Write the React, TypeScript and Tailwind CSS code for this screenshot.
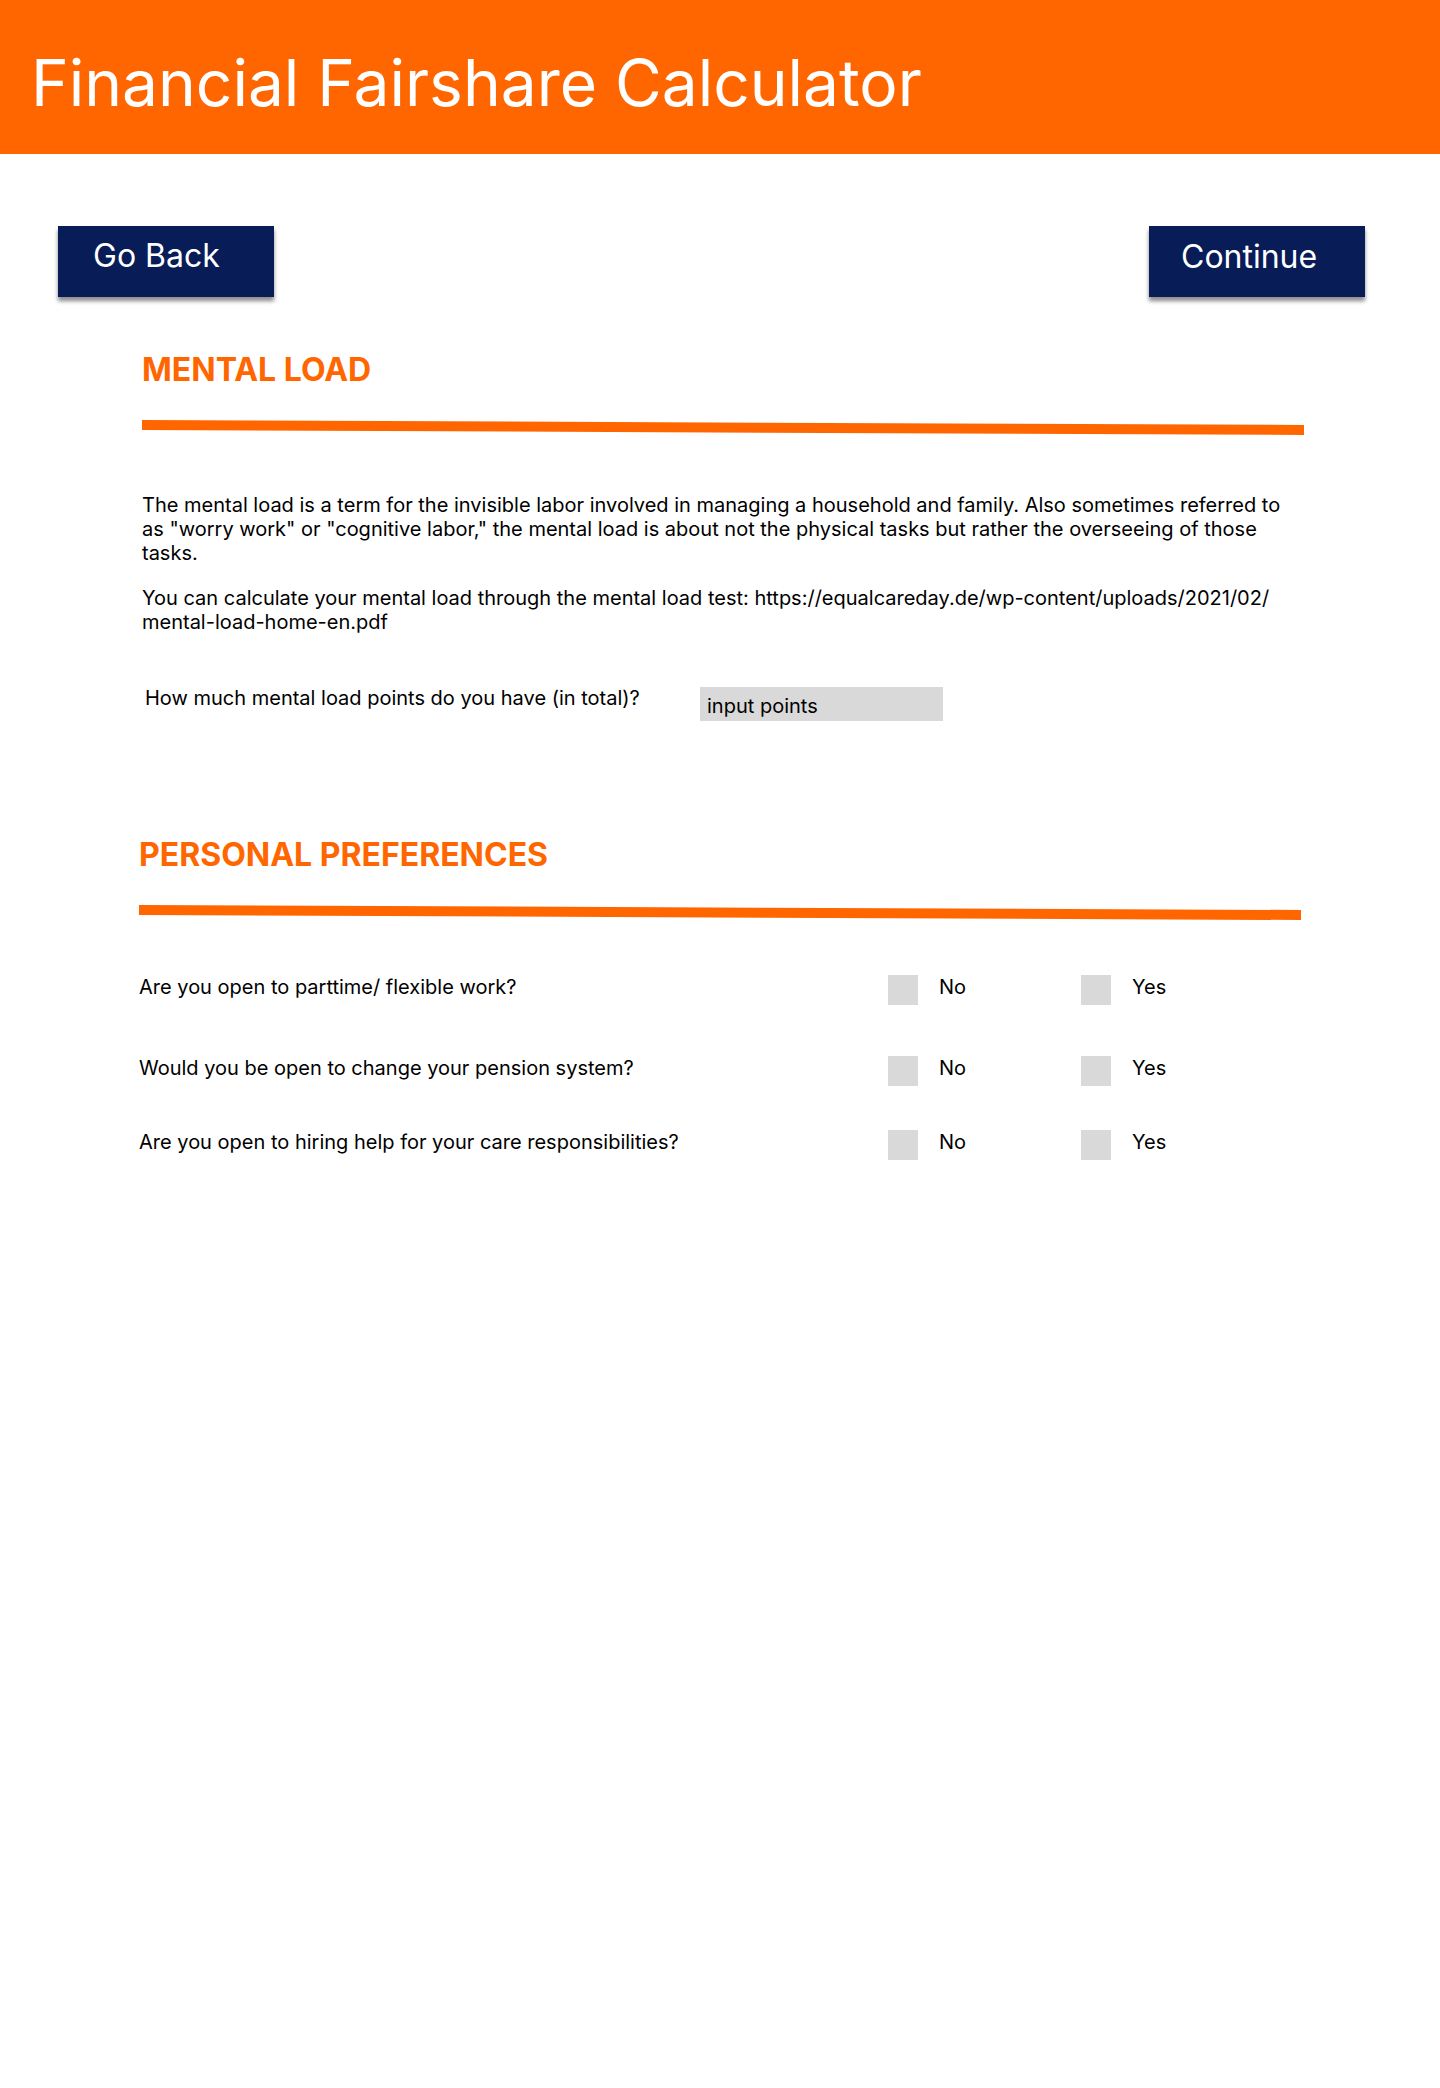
import React from "react";

type Preference = { id: string; question: string; spacing: string };

const preferences: Preference[] = [
  { id: "flexible", question: "Are you open to parttime/ flexible work?", spacing: "mt-[55px]" },
  { id: "pension", question: "Would you be open to change your pension system?", spacing: "mt-[51px]" },
  { id: "help", question: "Are you open to hiring help for your care responsibilities?", spacing: "mt-11" },
];

function SectionHeading({ children }: { children: React.ReactNode }) {
  return (
    <>
      <h2 className="text-[32px] leading-[39px] font-bold text-[#ff6600]">{children}</h2>
      <svg
        className="mt-[31px] block h-[15px] w-full fill-[#ff6600]"
        viewBox="0 0 1162 15"
        preserveAspectRatio="none"
        aria-hidden="true"
      >
        <polygon points="0,0 1162,5 1162,15 0,10" />
      </svg>
    </>
  );
}

function Option({ group, label }: { group: string; label: string }) {
  return (
    <label className="flex w-[193px] items-start gap-[21px]">
      <input
        type="checkbox"
        name={group}
        value={label}
        className="size-[30px] shrink-0 appearance-none bg-[#d9d9d9] checked:bg-[#081c58]"
      />
      <span>{label}</span>
    </label>
  );
}

export default function App() {
  return (
    <div className="min-h-screen bg-white font-['Inter',sans-serif] text-xl leading-6 text-black">
      <header className="bg-[#ff6600] px-[31px] pt-11 pb-[33px]">
        <h1 className="text-[64px] leading-[77px] font-normal text-white">Financial Fairshare Calculator</h1>
      </header>

      <nav className="flex justify-between pt-[72px] pr-[75px] pl-[58px] text-[32px] leading-[39px] font-normal text-white">
        <button
          type="button"
          className="h-[71px] w-[216px] bg-[#081c58] pb-3 pl-[35px] text-left shadow-[0_4px_4px_rgba(0,0,0,0.25),0_4px_4px_rgba(0,0,0,0.25)]"
        >
          Go Back
        </button>
        <button
          type="button"
          className="h-[71px] w-[216px] bg-[#081c58] pb-[10px] pl-8 text-left shadow-[0_4px_4px_rgba(0,0,0,0.25),0_4px_4px_rgba(0,0,0,0.25)]"
        >
          Continue
        </button>
      </nav>

      <main>
        <section className="mt-[53px] pr-[136px] pl-[142px]">
          <SectionHeading>MENTAL LOAD</SectionHeading>
          <p className="mt-[58px] pr-2">
            The mental load is a term for the invisible labor involved in managing a household and family. Also
            sometimes referred to as "worry work" or "cognitive labor," the mental load is about not the physical
            tasks but rather the overseeing of those tasks.
          </p>
          <p className="mt-[21px]">
            You can calculate your mental load through the mental load test:{" "}
            <a
              className="whitespace-nowrap"
              href="https://equalcareday.de/wp-content/uploads/2021/02/mental-load-home-en.pdf"
            >
              https://equalcareday.de/wp-content/uploads/2021/02/
              <wbr />
              mental-load-home-en.pdf
            </a>
          </p>
          <div className="mt-[52px] flex items-start pl-[3px]">
            <label htmlFor="points" className="w-[555px]">
              How much mental load points do you have (in total)?
            </label>
            <input
              id="points"
              type="text"
              placeholder="input points"
              className="mt-px h-[34px] w-[243px] bg-[#d9d9d9] pt-[7px] pr-2 pb-[3px] pl-[7px] outline-none placeholder:text-black placeholder:opacity-100"
            />
          </div>
        </section>

        <section className="mt-[114px] px-[139px] pb-24">
          <SectionHeading>PERSONAL PREFERENCES</SectionHeading>
          {preferences.map(({ id, question, spacing }) => (
            <fieldset key={id} className={spacing} aria-labelledby={`${id}-question`}>
              <div className="flex items-start">
                <p id={`${id}-question`} className="w-[749px]">
                  {question}
                </p>
                <Option group={id} label="No" />
                <Option group={id} label="Yes" />
              </div>
            </fieldset>
          ))}
        </section>
      </main>
    </div>
  );
}
